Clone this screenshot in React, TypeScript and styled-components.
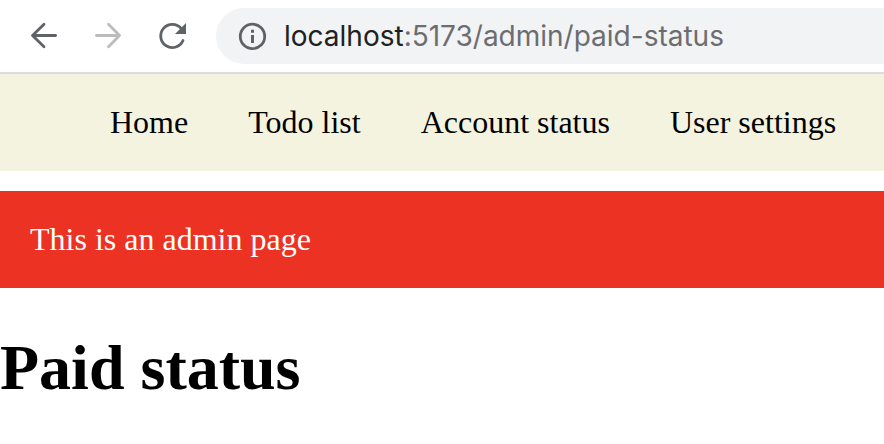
import React from 'react';
import styled, { createGlobalStyle } from 'styled-components';

const GlobalStyle = createGlobalStyle`
  body {
    margin: 0;
    background: #fff;
    overflow: hidden;
    font-family: 'Liberation Serif', 'Times New Roman', serif;
    font-size: 32px;
    line-height: 37px;
    color: #000;
  }
`;

const Toolbar = styled.header`
  box-sizing: border-box;
  display: flex;
  height: 74px;
  padding: 8px 0 8px 24px;
  border-bottom: 2px solid #dadce0;
`;

const ToolButton = styled.button<{ $faded?: boolean }>`
  display: flex;
  align-items: center;
  justify-content: center;
  width: 40px;
  height: 56px;
  margin-right: 24px;
  padding: 0;
  border: 0;
  background: none;
  color: ${(p) => (p.$faded ? '#babcbe' : '#5f6368')};
`;

const Icon = styled.svg`
  display: block;
  flex: none;
  width: 40px;
  height: 40px;
  fill: none;
  stroke: currentColor;
  stroke-width: 2.8;
  stroke-linecap: round;
  stroke-linejoin: round;
`;

const AddressBar = styled.div`
  display: flex;
  flex: 1;
  align-items: center;
  height: 56px;
  padding-left: 16px;
  border-radius: 28px 0 0 28px;
  background: #f1f3f4;
  color: #5f6368;
`;

const Url = styled.span`
  margin-left: 12px;
  font-family: Inter, sans-serif;
  font-size: 28px;
  line-height: 34px;
  white-space: nowrap;
  color: #6b6d70;
`;

const Host = styled.span`
  color: #202124;
`;

const Nav = styled.nav`
  display: flex;
  gap: 60px;
  padding: 30px 0 30px 110px;
  background: #f4f3df;
`;

const NavLink = styled.a`
  color: #000;
  white-space: nowrap;
`;

const Banner = styled.div`
  margin-top: 20px;
  padding: 30px;
  background: #ec3323;
  color: #fff;
`;

const Title = styled.h1`
  margin: 43px 0 0;
  font-size: 64px;
  line-height: 73px;
  font-weight: 700;
`;

const links = ['Home', 'Todo list', 'Account status', 'User settings'];

export default function App() {
  return (
    <>
      <GlobalStyle />
      <Toolbar>
        <ToolButton aria-label="Back">
          <Icon viewBox="0 0 40 40">
            <path d="M31.6 19.5H8.5M20 8.3L8.5 19.5L20 30.7" />
          </Icon>
        </ToolButton>
        <ToolButton aria-label="Forward" $faded>
          <Icon viewBox="0 0 40 40">
            <path d="M8.4 19.5H31.5M20.5 8.3L31.5 19.5L20.5 30.7" />
          </Icon>
        </ToolButton>
        <ToolButton aria-label="Reload">
          <Icon viewBox="0 0 40 40">
            <path d="M29.2 12.5A11.6 11.6 0 1 0 31 24.5" />
            <path d="M34 7V18H23Z" fill="currentColor" stroke="none" />
          </Icon>
        </ToolButton>
        <AddressBar>
          <Icon viewBox="0 0 40 40">
            <circle cx="20.5" cy="20.4" r="12.2" />
            <path d="M19 13.8h3v3h-3zM19 19h3v8h-3z" fill="currentColor" stroke="none" />
          </Icon>
          <Url>
            <Host>localhost</Host>:5173/admin/paid-status
          </Url>
        </AddressBar>
      </Toolbar>
      <Nav>
        {links.map((label) => (
          <NavLink key={label}>{label}</NavLink>
        ))}
      </Nav>
      <Banner>This is an admin page</Banner>
      <Title>Paid status</Title>
    </>
  );
}
